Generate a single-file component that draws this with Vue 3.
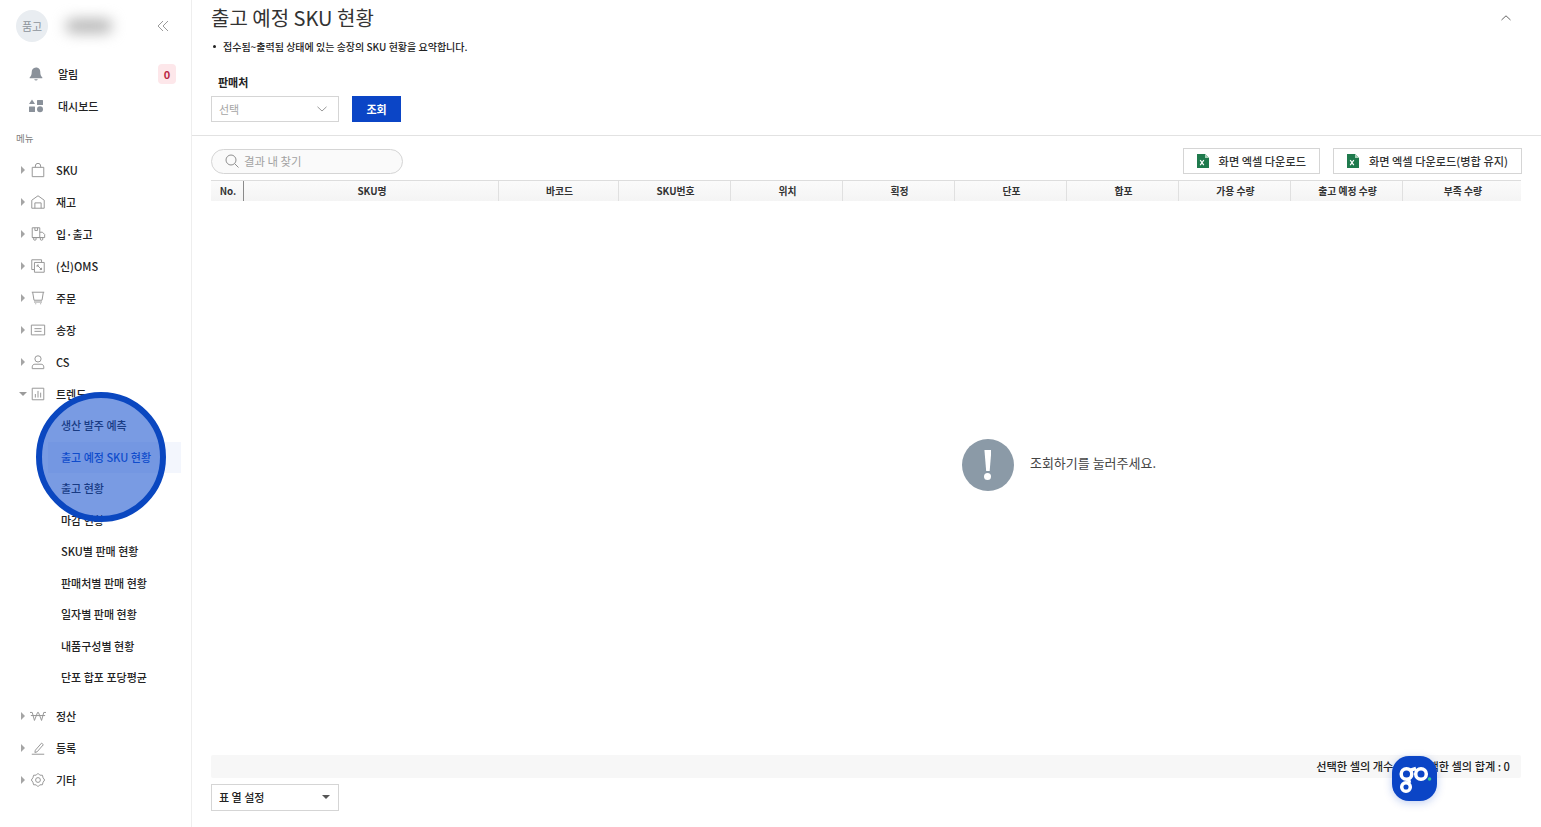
<template>
  <div class="page">
    <aside class="sidebar">
      <div class="side-head">
        <div class="avatar">품고</div>
        <div class="blur-name"></div>
        <svg class="collapse" width="12" height="12" viewBox="0 0 12 12"><path d="M6 1 1 6l5 5M11 1 6 6l5 5" /></svg>
      </div>

      <div class="top-row">
        <svg class="top-icon" width="16" height="16" viewBox="0 0 16 16"><path d="M8 1.500c-3 0-4.300 2.200-4.300 4.700 0 2.500-.7 3.900-2 5.100v.9h12.600v-.9c-1.300-1.200-2-2.600-2-5.100 0-2.500-1.300-4.700-4.300-4.700Z" /><path d="M6.200 13.300a1.900 1.900 0 0 0 3.600 0Z" /></svg>
        <span>알림</span>
        <b class="badge">0</b>
      </div>
      <div class="top-row">
        <svg class="top-icon" width="16" height="16" viewBox="0 0 16 16"><path d="M4 1.500 7 6H1Z" /><rect x="9" y="2" width="6" height="5" rx=".5" /><rect x="1" y="8.500" width="6" height="5.500" rx=".5" /><circle cx="12" cy="11.300" r="3" /></svg>
        <span>대시보드</span>
      </div>
      <div class="menu-title">메뉴</div>

      <nav>
        <template v-for="item in menu" :key="item.label">
          <div class="menu-row">
            <i class="arrow" :class="{ open: item.children }"></i>
            <svg class="menu-icon" width="16" height="16" viewBox="0 0 18 18" v-html="item.icon"></svg>
            <span>{{ item.label }}</span>
          </div>
          <div v-if="item.children" class="sub-list">
            <div v-for="sub in item.children" :key="sub" class="sub-row" :class="{ active: sub === activeSub }">{{ sub }}</div>
          </div>
        </template>
      </nav>
      <div class="spot"></div>
    </aside>

    <main class="content">
      <section class="filter">
        <div class="title-row">
          <h1>출고 예정 SKU 현황</h1>
          <svg class="fold" width="12" height="8" viewBox="0 0 12 8"><path d="M1.500 6 6 1.800 10.500 6" /></svg>
        </div>
        <p class="note"><span class="dot"></span>접수됨~출력됨 상태에 있는 송장의 SKU 현황을 요약합니다.</p>
        <label class="field-label">판매처</label>
        <div class="filter-line">
          <div class="select">
            <span>선택</span>
            <svg width="12" height="8" viewBox="0 0 12 8"><path d="M1.500 1.800 6 6l4.500-4.200" /></svg>
          </div>
          <button class="search-btn">조회</button>
        </div>
      </section>

      <section class="result">
        <div class="toolbar">
          <div class="search">
            <svg width="16" height="16" viewBox="0 0 16 16"><circle cx="7" cy="7" r="5" /><path d="m10.700 10.700 3.800 3.800" /></svg>
            <span>결과 내 찾기</span>
          </div>
          <div class="downloads">
            <button v-for="label in downloads" :key="label" class="excel-btn">
              <svg width="12" height="14" viewBox="0 0 12 14"><path class="sheet" d="M0 0h8l4 4v10H0Z" /><path class="corner" d="M8 0l4 4H8Z" /><path class="mark" d="m3.200 6.200 3.600 5M6.800 6.200l-3.600 5" /></svg>
              {{ label }}
            </button>
          </div>
        </div>

        <div class="thead">
          <div v-for="col in columns" :key="col" class="th">{{ col }}</div>
        </div>

        <div class="empty">
          <div class="empty-icon"><span class="bang"></span><span class="bang-dot"></span></div>
          <p>조회하기를 눌러주세요.</p>
        </div>

        <div class="summary">선택한 셀의 개수 : 0&nbsp;&nbsp;&nbsp;&nbsp;선택한 셀의 합계 : 0</div>
        <div class="col-setting">
          <span>표 열 설정</span>
          <i class="caret"></i>
        </div>
      </section>
    </main>

    <div class="go-btn">
      <svg width="45" height="45" viewBox="0 0 45 45">
        <g class="go-stroke">
          <circle cx="14.500" cy="18" r="5.300" />
          <circle cx="14" cy="31" r="4.300" />
          <path d="M16.500 23.200 17.500 27M18.500 14.200 24 12.500" />
          <circle cx="29" cy="18" r="5.300" />
        </g>
        <circle cx="37.500" cy="23" r="1.800" fill="#35c98e" />
      </svg>
    </div>
  </div>
</template>

<script setup>
const activeSub = "출고 예정 SKU 현황";

const downloads = ["화면 엑셀 다운로드", "화면 엑셀 다운로드(병합 유지)"];

const columns = ["No.", "SKU명", "바코드", "SKU번호", "위치", "획정", "단포", "합포", "가용 수량", "출고 예정 수량", "부족 수량"];

const menu = [
  { label: "SKU", icon: '<path d="M2.500 6h13v10.500h-13ZM6 6V4.500a3 3 0 0 1 6 0V6"/>' },
  { label: "재고", icon: '<path d="M2 16V7l7-5 7 5v9ZM5.500 16v-6h7v6"/>' },
  { label: "입·출고", icon: '<path d="M2.500 13V2h8.500v11ZM5.500 2v3h3V2M11 7h3l2.500 2.500V13H11M2.500 13h2M7 13h4"/><circle cx="5.500" cy="14.500" r="1.500"/><circle cx="13" cy="14.500" r="1.500"/>' },
  { label: "(신)OMS", icon: '<path d="M5 13H2V2h11v3M5 5h11v11H5ZM8 8l5 5M8 8h2M8 8v2M13 13h-2M13 13v-2"/>' },
  { label: "주문", icon: '<path d="M2 2.500h14M3 2.500l1.500 9h9l1.500-9M4.500 13.500h9M6 15.500h1M11.500 15.500h1"/>' },
  { label: "송장", icon: '<path d="M1.500 3.500h15v11h-15ZM5 7.500h8M5 10.500h8"/>' },
  { label: "CS", icon: '<circle cx="9" cy="5.500" r="3.500"/><path d="M2.500 16.500v-2c0-2 1.500-3 3-3h7c1.500 0 3 1 3 3v2Z"/>' },
  {
    label: "트렌드",
    icon: '<path d="M2.500 2.500h13v13h-13ZM6 13V9M9 13V5.500M12 13V7.500"/>',
    children: ["생산 발주 예측", "출고 예정 SKU 현황", "출고 현황", "마감 현황", "SKU별 판매 현황", "판매처별 판매 현황", "일자별 판매 현황", "내품구성별 현황", "단포 합포 포당평균"],
  },
  { label: "정산", icon: '<path d="M0 5h2.500l2.500 9 3.500-9h1l3.500 9 2.500-9H18M1 8.500h16"/>' },
  { label: "등록", icon: '<path d="M6 11.500l7-8 2 1.800-7 8-2.500.7ZM2 16h14"/>' },
  { label: "기타", icon: '<path d="M9 1.500l2 2 3 .2.700 2.800 1.800 2.500-1.800 2.500-.7 2.800-3 .2-2 2-2-2-3-.2-.7-2.800L1.500 9l1.800-2.500.7-2.800 3-.2Z"/><circle cx="9" cy="9" r="2.700"/>' },
];
</script>

<style>
html,
body {
  margin: 0;
  overflow: hidden;
  background: #fff;
}
</style>

<style scoped>
.page {
  position: relative;
  display: flex;
  height: 827px;
  font-family: "Noto Sans CJK KR", "Noto Sans", sans-serif;
  color: #222;
  overflow: hidden;
}

.sidebar {
  position: relative;
  flex: 0 0 191px;
  border-right: 1px solid #eee;
}

.side-head {
  display: flex;
  align-items: center;
  box-sizing: border-box;
  height: 58px;
  padding: 0 22px 4px 16px;
}

.avatar {
  display: flex;
  align-items: center;
  justify-content: center;
  width: 32px;
  height: 32px;
  margin-top: -2px;
  border-radius: 50%;
  background: #e9edf1;
  color: #8d949b;
  font-size: 11px;
}

.blur-name {
  width: 46px;
  height: 14px;
  margin-left: 18px;
  margin-top: -2px;
  background: #b5b5b5;
  border-radius: 6px;
  filter: blur(7px);
}

.collapse {
  margin-left: auto;
  margin-top: -2px;
  fill: none;
  stroke: #9a9a9a;
}

.top-row {
  display: flex;
  align-items: center;
  height: 32px;
  padding: 0 15px 0 28px;
  font-size: 11px;
  font-weight: 500;
}

.top-row span {
  margin-top: -1px;
}

.top-icon {
  margin-right: 14px;
  fill: #8a919a;
}

.badge {
  display: flex;
  align-items: center;
  justify-content: center;
  width: 18px;
  height: 20px;
  margin-left: auto;
  border-radius: 4px;
  background: #fde7ea;
  color: #bb2a45;
  font-size: 11px;
}

.menu-title {
  display: flex;
  align-items: center;
  height: 32px;
  padding-left: 16px;
  color: #808080;
  font-size: 9.500px;
}

.menu-row {
  display: flex;
  align-items: center;
  height: 32px;
  padding-left: 21px;
  font-size: 11px;
  font-weight: 500;
}

.menu-row span {
  margin-top: -1px;
}

.arrow {
  width: 0;
  height: 0;
  margin-right: 5px;
  border-top: 4px solid transparent;
  border-bottom: 4px solid transparent;
  border-left: 4px solid #a5a5a5;
}

.arrow.open {
  margin-left: -2px;
  margin-right: 3px;
  border-top: 4px solid #9b9b9b;
  border-bottom: 0;
  border-left: 4px solid transparent;
  border-right: 4px solid transparent;
}

.menu-icon {
  margin-right: 10px;
  fill: none;
  stroke: #969696;
  stroke-width: 1.100;
}

.sub-list {
  padding-bottom: 6.500px;
}

.sub-row {
  display: flex;
  align-items: center;
  box-sizing: border-box;
  height: 31.500px;
  margin-right: 10px;
  padding: 0 0 1px 61px;
  font-size: 11px;
  font-weight: 500;
  color: #222;
}

.sub-row.active {
  margin-left: 48px;
  padding-left: 13px;
  background: #f3f6fd;
  color: #0b49c9;
}

.spot {
  position: absolute;
  left: 36px;
  top: 392px;
  width: 118px;
  height: 118px;
  border: 6px solid #0a47c0;
  border-radius: 50%;
  background: rgba(20, 80, 205, 0.57);
}

.content {
  display: flex;
  flex: 1;
  flex-direction: column;
  min-width: 0;
}

.filter {
  height: 135px;
  flex: none;
  padding: 0 20px 0 19px;
  border-bottom: 1px solid #e2e2e2;
}

.title-row {
  display: flex;
  align-items: center;
  justify-content: space-between;
  height: 36px;
  padding-right: 9px;
}

h1 {
  margin: 0;
  font-size: 20px;
  font-weight: 400;
  line-height: 36px;
  color: #333;
}

.fold {
  fill: none;
  stroke: #666;
}

.note {
  display: flex;
  align-items: center;
  height: 18px;
  margin: 1px 0 0;
  padding: 0 0 0 2px;
  font-size: 10px;
  font-weight: 500;
}

.dot {
  width: 3px;
  height: 3px;
  margin-right: 7px;
  border-radius: 50%;
  background: #222;
}

.field-label {
  display: block;
  margin: 19px 0 6px 7px;
  font-size: 11px;
  font-weight: 700;
  line-height: 16px;
}

.filter-line {
  display: flex;
  gap: 13px;
}

.select {
  display: flex;
  align-items: center;
  justify-content: space-between;
  box-sizing: border-box;
  width: 128px;
  height: 26px;
  padding: 0 10px 0 7px;
  border: 1px solid #d5d5d5;
  color: #a5a5a5;
  font-size: 11px;
}

.select svg {
  fill: none;
  stroke: #999;
}

.search-btn {
  width: 49px;
  height: 26px;
  padding: 0 0 1px;
  border: none;
  background: #0b45c6;
  color: #fff;
  font-family: inherit;
  font-size: 11px;
  font-weight: 700;
}

.result {
  display: flex;
  flex: 1;
  flex-direction: column;
  min-height: 0;
  padding: 12px 19px 16px;
}

.toolbar {
  display: flex;
  align-items: center;
  justify-content: space-between;
  height: 26px;
}

.search {
  display: flex;
  align-items: center;
  box-sizing: border-box;
  width: 192px;
  height: 25px;
  margin-top: 1px;
  padding: 0 0 1px 12px;
  border: 1px solid #d5d5d5;
  border-radius: 13px;
  background: #fafafa;
  color: #a2a2a2;
  font-size: 11.400px;
}

.search svg {
  margin-right: 4px;
  fill: none;
  stroke: #8f8f8f;
}

.downloads {
  display: flex;
  gap: 13px;
}

.excel-btn {
  display: flex;
  align-items: center;
  justify-content: center;
  gap: 10px;
  height: 26px;
  padding: 0 13px;
  border: 1px solid #d5d5d5;
  background: #fff;
  color: #333;
  font-family: inherit;
  font-size: 11.200px;
  font-weight: 500;
}

.sheet {
  fill: #1f7a4d;
}

.corner {
  fill: #a9d3bb;
}

.mark {
  fill: none;
  stroke: #fff;
  stroke-width: 1.200;
}

.thead {
  display: grid;
  grid-template-columns: 33px 255px 120px 112px 112px 112px 112px 112px 112px 112px 118px;
  flex: none;
  width: 1310px;
  height: 21px;
  margin-top: 6px;
  box-sizing: border-box;
  border-top: 1px solid #ddd;
  background: linear-gradient(#fbfbfb, #f4f4f4);
}

.th {
  display: flex;
  align-items: center;
  justify-content: center;
  box-sizing: border-box;
  padding-left: 2px;
  border-right: 1px solid #e0e0e0;
  font-size: 9.800px;
  font-weight: 700;
  color: #333;
}

.th:first-child {
  border-right-color: #8a8a8a;
}

.th:last-child {
  border-right: none;
}

.empty {
  display: flex;
  flex: 1;
  align-items: center;
  justify-content: center;
  gap: 16px;
  padding: 0 0 26px 385px;
}

.empty-icon {
  position: relative;
  width: 52px;
  height: 52px;
  border-radius: 50%;
  background: #8b9aa7;
}

.bang {
  position: absolute;
  left: 22.500px;
  top: 11px;
  width: 7px;
  height: 21px;
  background: #fff;
  clip-path: polygon(0 0, 100% 0, 75% 100%, 25% 100%);
}

.bang-dot {
  position: absolute;
  left: 22.500px;
  top: 34px;
  width: 7px;
  height: 7px;
  border-radius: 50%;
  background: #fff;
}

.empty p {
  margin: -6px 0 0;
  font-size: 13px;
  color: #444;
}

.summary {
  flex: none;
  box-sizing: border-box;
  width: 1310px;
  height: 23px;
  padding-right: 11px;
  background: #f7f7f7;
  border-radius: 2px;
  font-size: 11.200px;
  font-weight: 500;
  line-height: 22px;
  text-align: right;
}

.col-setting {
  display: flex;
  align-items: center;
  justify-content: space-between;
  flex: none;
  box-sizing: border-box;
  width: 128px;
  height: 27px;
  margin-top: 6px;
  padding: 0 8px 1px 7px;
  border: 1px solid #d5d5d5;
  font-size: 11px;
  font-weight: 500;
}

.caret {
  width: 0;
  height: 0;
  border-top: 4px solid #555;
  border-left: 4px solid transparent;
  border-right: 4px solid transparent;
}

.go-btn {
  position: absolute;
  left: 1392px;
  top: 756px;
  width: 45px;
  height: 45px;
  border-radius: 17px;
  background: #0b45c6;
  box-shadow: 0 2px 8px rgba(11, 69, 198, 0.25);
}

.go-btn svg {
  display: block;
}

.go-stroke {
  fill: none;
  stroke: #fff;
  stroke-width: 3.500;
}
</style>
